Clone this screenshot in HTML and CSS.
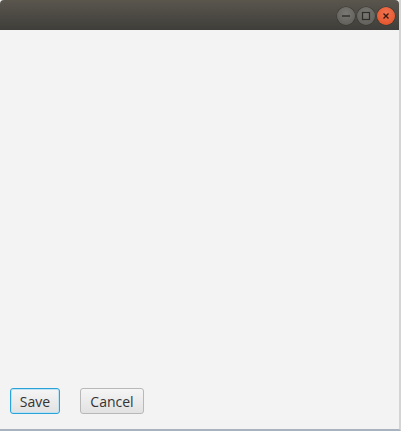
FILE: index.html
```html
<!DOCTYPE html>
<html>
<head>
<meta charset="utf-8">
<link rel="stylesheet" href="styles.css">
</head>
<body>
<div class="window">
  <div class="titlebar">
    <div class="controls">
      <span class="ctl"><svg width="18" height="18" viewBox="0 0 18 18"><line x1="5" y1="9" x2="13" y2="9" stroke="#2e2d2a" stroke-width="1.4"/></svg></span>
      <span class="ctl"><svg width="18" height="18" viewBox="0 0 18 18"><rect x="5.5" y="5.5" width="7" height="7" fill="none" stroke="#2e2d2a" stroke-width="1.2"/></svg></span>
      <span class="ctl close"><svg width="18" height="18" viewBox="0 0 18 18"><path d="M6.5 6.5 L11.5 11.5 M11.5 6.5 L6.5 11.5" stroke="#3a1a10" stroke-width="1.4"/></svg></span>
    </div>
  </div>
  <div class="content">
    <div class="spacer"></div>
    <div class="footer">
      <button class="btn focused">Save</button>
      <button class="btn">Cancel</button>
    </div>
  </div>
</div>
</body>
</html>
```
FILE: styles.css
```css
html, body {
  margin: 0;
  padding: 0;
  width: 401px;
  height: 431px;
  overflow: hidden;
  background: #f3f3f3;
}
.window {
  display: flex;
  flex-direction: column;
  height: 431px;
  box-sizing: border-box;
  border-right: 2px solid #d4d4d4;
  border-bottom: 2px solid #a9b2bf;
}
.titlebar {
  height: 30px;
  flex: none;
  background: linear-gradient(#5a564e, #3f3e3a);
  border-top-left-radius: 4px;
  border-top-right-radius: 4px;
  display: flex;
  justify-content: flex-end;
  align-items: flex-start;
}
.controls {
  display: flex;
  gap: 2px;
  padding-top: 7px;
  padding-right: 4px;
}
.ctl {
  width: 18px;
  height: 18px;
  border-radius: 50%;
  background: radial-gradient(circle at 50% 35%, #7a7872, #5c5a55);
  box-shadow: 0 0 0 0.5px #35342f;
  display: flex;
}
.ctl.close {
  background: radial-gradient(circle at 50% 35%, #f27350, #e04e24);
}
.content {
  flex: 1;
  display: flex;
  flex-direction: column;
  background: #f3f3f3;
}
.spacer {
  flex: 1;
}
.footer {
  display: flex;
  gap: 20px;
  padding: 0 0 15px 10px;
}
.btn {
  height: 26px;
  box-sizing: border-box;
  padding: 0 6px;
  font-family: "Open Sans", "DejaVu Sans", sans-serif;
  font-size: 14px;
  color: #333;
  background: linear-gradient(#f5f5f5, #e2e2e2);
  border: 1px solid #b8b8b8;
  border-radius: 3px;
}
.btn.focused {
  width: 50px;
  border-color: #2aa3d8;
  box-shadow: inset 0 0 0 1px #bfe3f3;
}
.btn:not(.focused) {
  width: 64px;
}
```
